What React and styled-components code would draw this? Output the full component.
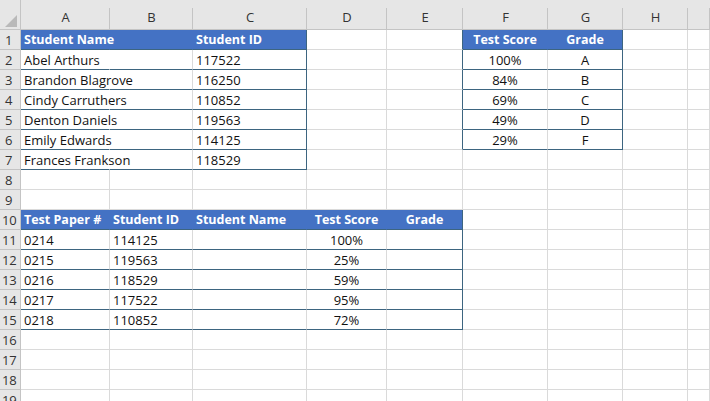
import React from "react";
import styled, { createGlobalStyle } from "styled-components";

const GRID = "#dadada";
const HEAD_LINE = "#c4c4c4";
const DARK = "#3d6580";
const BLUE = "#4472c4";

const COLS = ["A", "B", "C", "D", "E", "F", "G", "H", ""];
const WIDTHS = "21px 89px 83px 114px 80px 76px 85px 75px 65px 1fr";

// tables on the sheet: rows/cols are 1-based, cols count from A = 1
const TABLES = [
  { r1: 1, r2: 7, c1: 1, c2: 3, headAlign: "left" },
  { r1: 10, r2: 15, c1: 1, c2: 5, headAlign: "left" },
  { r1: 1, r2: 6, c1: 6, c2: 7, headAlign: "center" },
];

const CELLS = {
  "1-1": "Student Name",
  "1-3": "Student ID",
  "2-1": "Abel Arthurs",
  "2-3": "117522",
  "3-1": "Brandon Blagrove",
  "3-3": "116250",
  "4-1": "Cindy Carruthers",
  "4-3": "110852",
  "5-1": "Denton Daniels",
  "5-3": "119563",
  "6-1": "Emily Edwards",
  "6-3": "114125",
  "7-1": "Frances Frankson",
  "7-3": "118529",
  "1-6": "Test Score",
  "1-7": "Grade",
  "2-6": "100%",
  "2-7": "A",
  "3-6": "84%",
  "3-7": "B",
  "4-6": "69%",
  "4-7": "C",
  "5-6": "49%",
  "5-7": "D",
  "6-6": "29%",
  "6-7": "F",
  "10-1": "Test Paper #",
  "10-2": "Student ID",
  "10-3": "Student Name",
  "10-4": "Test Score",
  "10-5": "Grade",
  "11-1": "0214",
  "11-2": "114125",
  "11-4": "100%",
  "12-1": "0215",
  "12-2": "119563",
  "12-4": "25%",
  "13-1": "0216",
  "13-2": "118529",
  "13-4": "59%",
  "14-1": "0217",
  "14-2": "117522",
  "14-4": "95%",
  "15-1": "0218",
  "15-2": "110852",
  "15-4": "72%",
};

const CENTERED = { 4: [10, 11, 12, 13, 14, 15], 5: [10], 6: [1, 2, 3, 4, 5, 6], 7: [1, 2, 3, 4, 5, 6] };

const GlobalStyle = createGlobalStyle`
  html, body {
    margin: 0;
    padding: 0;
    background: #ffffff;
    overflow: hidden;
  }
  body {
    font-family: "Open Sans", "Noto Sans", sans-serif;
  }
`;

const Sheet = styled.div`
  display: grid;
  grid-template-columns: ${WIDTHS};
  grid-template-rows: 30px repeat(19, 20px);
  width: 710px;
  height: 401px;
  overflow: hidden;
  background: #ffffff;
  font-size: 13px;
  color: #111;
`;

const Corner = styled.div`
  position: relative;
  background: #e6e6e6;
  border-right: 1px solid ${HEAD_LINE};
  border-bottom: 1px solid ${HEAD_LINE};
  box-sizing: border-box;

  &::after {
    content: "";
    position: absolute;
    right: 3px;
    bottom: 2px;
    width: 0;
    height: 0;
    border-left: 12px solid transparent;
    border-bottom: 12px solid #b9b9b9;
  }
`;

const ColHeader = styled.div`
  background: #e6e6e6;
  border-bottom: 1px solid ${HEAD_LINE};
  box-sizing: border-box;
  display: flex;
  align-items: flex-end;
  justify-content: center;
  padding-bottom: 3px;
  color: #333;
  font-size: 13px;
  position: relative;

  &::after {
    content: "";
    position: absolute;
    right: 0;
    top: 8px;
    bottom: 0;
    width: 1px;
    background: ${HEAD_LINE};
  }
`;

const RowHeader = styled.div`
  background: #e6e6e6;
  border-right: 1px solid ${HEAD_LINE};
  border-bottom: 1px solid ${HEAD_LINE};
  box-sizing: border-box;
  display: flex;
  align-items: center;
  padding-left: ${(p) => (p.$wide ? "2px" : "5px")};
  color: #333;
  font-size: 13px;
  letter-spacing: -0.3px;
`;

const Cell = styled.div`
  box-sizing: border-box;
  display: flex;
  align-items: center;
  justify-content: ${(p) => (p.$align === "center" ? "center" : "flex-start")};
  padding: 0 3px;
  white-space: nowrap;
  overflow: visible;
  position: ${(p) => (p.$spill ? "relative" : "static")};
  z-index: ${(p) => (p.$spill ? 1 : "auto")};
  background: ${(p) => (p.$head ? BLUE : "#ffffff")};
  color: ${(p) => (p.$head ? "#ffffff" : "#111")};
  font-weight: ${(p) => (p.$head ? 700 : 400)};
  font-size: ${(p) => (p.$head ? "12.5px" : "13px")};
  border-right: 1px solid ${(p) => p.$right};
  border-bottom: 1px solid ${(p) => p.$bottom};
`;

const findTable = (r, c) =>
  TABLES.find((t) => r >= t.r1 && r <= t.r2 && c >= t.c1 && c <= t.c2);

const startsTable = (r, c) =>
  TABLES.find((t) => r >= t.r1 && r <= t.r2 && c === t.c1);

const renderCell = (r, c) => {
  const t = findTable(r, c);
  const next = startsTable(r, c + 1);
  const head = t && r === t.r1;
  const text = CELLS[`${r}-${c}`] || "";
  // long text runs over into an empty neighbour, as in the sheet
  const spill = text.length > 11 && !CELLS[`${r}-${c + 1}`];

  let right = GRID;
  let bottom = GRID;
  if (t) {
    if (head) right = c === t.c2 ? DARK : BLUE;
    if (c === t.c2) right = DARK;
    bottom = DARK;
  }
  if (next) right = DARK;
  if (spill && !head) right = "#ffffff";

  let align = "left";
  if (CENTERED[c] && CENTERED[c].includes(r)) align = "center";
  if (head && t.headAlign === "center") align = "center";

  return (
    <Cell
      key={`${r}-${c}`}
      $head={head}
      $spill={spill}
      $right={right}
      $bottom={bottom}
      $align={align}
    >
      {text}
    </Cell>
  );
};

const App = () => {
  const rows = Array.from({ length: 19 }, (_, i) => i + 1);

  return (
    <>
      <GlobalStyle />
      <Sheet>
        <Corner />
        {COLS.map((col, i) => (
          <ColHeader key={`h${i}`}>{col}</ColHeader>
        ))}
        {rows.map((r) => (
          <React.Fragment key={r}>
            <RowHeader $wide={r >= 10}>{r}</RowHeader>
            {COLS.map((_, i) => renderCell(r, i + 1))}
          </React.Fragment>
        ))}
      </Sheet>
    </>
  );
};

export default App;
